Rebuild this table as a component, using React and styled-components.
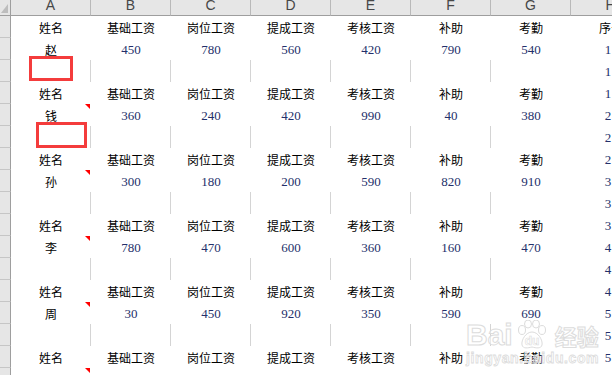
import React from 'react'
import styled, { createGlobalStyle } from 'styled-components'

const GlobalStyle = createGlobalStyle`
  html, body {
    margin: 0;
    padding: 0;
    background: #fff;
    overflow: hidden;
  }
`

const Sheet = styled.div`
  position: relative;
  width: 612px;
  height: 375px;
  overflow: hidden;
  display: grid;
  grid-template-columns: 11px repeat(8, 80px);
  grid-template-rows: 16px;
  grid-auto-rows: 22px;
  font-family: "Noto Sans CJK SC", sans-serif;
  font-size: 12px;
  color: #000;
  background: #fff;
`

const Corner = styled.div`
  position: relative;
  background: #e6e6e6;
  border-right: 1px solid #9e9e9e;
  border-bottom: 1px solid #9e9e9e;
  box-sizing: border-box;
  overflow: hidden;

  &::after {
    content: '';
    position: absolute;
    left: 1px;
    bottom: 2px;
    border-bottom: 9px solid #bdbdbd;
    border-left: 7px solid transparent;
  }
`

const ColHead = styled.div`
  background: #e6e6e6;
  border-right: 1px solid #b9b9b9;
  border-bottom: 1px solid #9e9e9e;
  box-sizing: border-box;
  display: flex;
  justify-content: center;
  align-items: flex-end;
  padding-bottom: 3px;
  overflow: hidden;
  font-family: "Liberation Sans", Arial, sans-serif;
  font-size: 14px;
  line-height: 1;
  color: #474747;
`

const RowHead = styled.div`
  background: #e6e6e6;
  border-right: 1px solid #9e9e9e;
  border-bottom: 1px solid #c6c6c6;
  box-sizing: border-box;
`

const Cell = styled.div`
  position: relative;
  box-sizing: border-box;
  display: flex;
  align-items: center;
  justify-content: center;
  padding-top: 1px;
  padding-right: ${p => (p.$edge ? '6px' : '0')};
  border-right: ${p => (p.$grid ? '1px solid #d4d4d4' : 'none')};
  white-space: nowrap;
  font-family: ${p =>
    p.$num ? '"Liberation Serif", "Times New Roman", serif' : '"Noto Sans CJK SC", sans-serif'};
  font-size: ${p => (p.$num ? '13px' : '12px')};
  color: ${p => (p.$num ? '#23306a' : '#000')};
`

const Marker = styled.span`
  position: absolute;
  top: 0;
  right: 1px;
  width: 0;
  height: 0;
  border-top: 5px solid #f00;
  border-left: 5px solid transparent;
`

const Highlight = styled.div`
  position: absolute;
  box-sizing: border-box;
  border: 3px solid #f43c3c;
`

const Watermark = styled.div`
  position: absolute;
  left: 466px;
  top: 320px;
  display: flex;
  flex-direction: column;
  align-items: flex-start;
  pointer-events: none;
`

const MarkLine = styled.div`
  display: flex;
  align-items: center;
  gap: 2px;
  font-family: "Liberation Sans", Arial, sans-serif;
  font-weight: bold;
  font-size: 30px;
  line-height: 28px;
  color: rgba(255, 255, 255, 0.5);
  -webkit-text-stroke: 1px #dcdcdc;
`

const MarkCJK = styled.span`
  font-family: "Noto Sans CJK SC", sans-serif;
  font-size: 22px;
  margin-left: 4px;
`

const MarkUrl = styled.div`
  font-family: "Liberation Sans", Arial, sans-serif;
  font-size: 14px;
  font-weight: bold;
  letter-spacing: 0.6px;
  line-height: 14px;
  color: rgba(255, 255, 255, 0.5);
  -webkit-text-stroke: 0.8px #dcdcdc;
  margin-top: 1px;
`

const letters = ['A', 'B', 'C', 'D', 'E', 'F', 'G', 'H']
const labels = ['姓名', '基础工资', '岗位工资', '提成工资', '考核工资', '补助', '考勤']

const people = [
  ['赵', [450, 780, 560, 420, 790, 540]],
  ['钱', [360, 240, 420, 990, 40, 380]],
  ['孙', [300, 180, 200, 590, 820, 910]],
  ['李', [780, 470, 600, 360, 160, 470]],
  ['周', [30, 450, 920, 350, 590, 690]],
  ['吴', [580, 380, 880, 460, 80, 550]],
]

function Paw() {
  return (
    <svg width="34" height="30" viewBox="0 0 34 30">
      <g fill="rgba(255,255,255,0.5)" stroke="#dcdcdc" strokeWidth="1">
        <ellipse cx="7" cy="10" rx="3.5" ry="4.5" />
        <ellipse cx="13" cy="4" rx="3.5" ry="4" />
        <ellipse cx="21" cy="4" rx="3.5" ry="4" />
        <ellipse cx="27" cy="10" rx="3.5" ry="4.5" />
        <path d="M17 12 C11 12 6 20 7 25 C8 29 13 28 17 27 C21 28 26 29 27 25 C28 20 23 12 17 12 Z" />
      </g>
      <text x="17" y="25" textAnchor="middle" fontFamily="Liberation Sans, Arial, sans-serif" fontWeight="bold" fontSize="12" fill="#fff" stroke="#dcdcdc" strokeWidth="0.6">du</text>
    </svg>
  )
}

function hValue(r) {
  if (r === 1) return '序号'
  return String(Math.floor((r - 2) / 3) + 1)
}

export default function App() {
  const rows = []
  people.forEach(([name, values], g) => {
    rows.push({ kind: 'label' })
    rows.push({ kind: 'value', name, values, marked: g > 0 })
    rows.push({ kind: 'empty' })
  })
  const visible = rows.slice(0, 17)

  return (
    <>
      <GlobalStyle />
      <Sheet>
        <Corner />
        {letters.map(l => (
          <ColHead key={l}>{l}</ColHead>
        ))}

        {visible.map((row, i) => {
          const r = i + 1
          const cells = []
          if (row.kind === 'label') {
            labels.forEach(t => cells.push(<Cell key={t}>{t}</Cell>))
          } else if (row.kind === 'value') {
            cells.push(
              <Cell key="name">
                {row.name}
                {row.marked && <Marker />}
              </Cell>
            )
            row.values.forEach((v, j) => cells.push(<Cell key={j} $num>{v}</Cell>))
          } else {
            labels.forEach((t, j) => cells.push(<Cell key={t} $grid={j < 6} />))
          }
          return (
            <React.Fragment key={r}>
              <RowHead />
              {cells}
              <Cell $num={r > 1} $edge={r > 1}>{hValue(r)}</Cell>
            </React.Fragment>
          )
        })}

        <Highlight style={{ left: 29, top: 56, width: 44, height: 25 }} />
        <Highlight style={{ left: 36, top: 122, width: 51, height: 26 }} />

        <Watermark>
          <MarkLine>
            Bai
            <Paw />
            <MarkCJK>经验</MarkCJK>
          </MarkLine>
          <MarkUrl>jingyan.baidu.com</MarkUrl>
        </Watermark>
      </Sheet>
    </>
  )
}
